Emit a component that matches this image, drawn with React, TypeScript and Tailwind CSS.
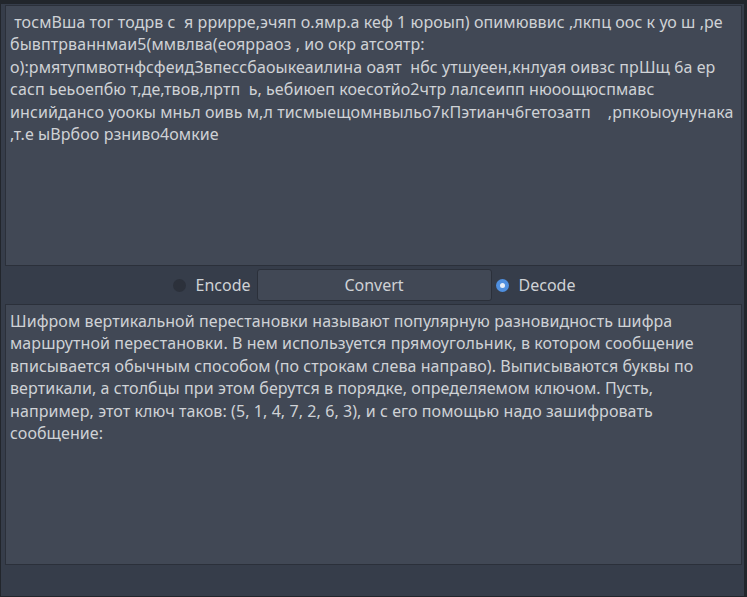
import React, { useState } from "react";

const topLines = [
  " тосмВша тог тодрв с  я ррирре,эчяп о.ямр.а кеф 1 юроып) опимюввис ,лкпц оос к уо ш ,ре",
  "бывптрваннмаи5(ммвлва(еоярраоз , ио окр атсоятр:",
  "о):рмятупмвотнфсфеидЗвпессбаоыкеаилина оаят  нбс утшуеен,кнлуая оивзс прШщ 6а ер",
  "сасп ьеьоепбю т,де,твов,лртп  ь, ьебиюеп коесотйо2чтр лалсеипп нюоощюспмавс",
  "инсийдансо уоокы мньл оивь м,л тисмыещомнвыльо7кПэтианч6гетозатп    ,рпкоыоунунака",
  ",т.е ыВрбоо рзниво4омкие",
];

const bottomLines = [
  "Шифром вертикальной перестановки называют популярную разновидность шифра",
  "маршрутной перестановки. В нем используется прямоугольник, в котором сообщение",
  "вписывается обычным способом (по строкам слева направо). Выписываются буквы по",
  "вертикали, а столбцы при этом берутся в порядке, определяемом ключом. Пусть,",
  "например, этот ключ таков: (5, 1, 4, 7, 2, 6, 3), и с его помощью надо зашифровать",
  "сообщение:",
];

function TextBox({ lines }: { lines: string[] }) {
  return (
    <div className="h-[261px] bg-[#414855] border border-[#2b303a] pt-[5px] pl-[4px] text-[16px] leading-[22.4px] tracking-[0.08px] text-[#cfd2d6]">
      {lines.map((l, i) => (
        <div key={i} className="whitespace-pre">
          {l}
        </div>
      ))}
    </div>
  );
}

function Radio({ label, checked, onClick }: { label: string; checked: boolean; onClick: () => void }) {
  return (
    <button onClick={onClick} className="flex items-center h-[32px] text-[16px] text-[#cfd2d6]">
      {checked ? (
        <span className="w-[13px] h-[13px] rounded-full bg-[#4f8fdf] flex items-center justify-center">
          <span className="w-[5px] h-[5px] rounded-full bg-[#e8eef7]" />
        </span>
      ) : (
        <span className="w-[13px] h-[13px] rounded-full bg-[#2c313b]" />
      )}
      <span className="ml-[10px] mr-[2px]">{label}</span>
    </button>
  );
}

export default function App() {
  const [mode, setMode] = useState<"encode" | "decode">("decode");

  return (
    <div
      className="w-[747px] h-[597px] bg-[#363d4a] border-l border-b border-r-[3px] border-t-[4px] border-[#22262c] pt-[1px] pl-[4px] pr-[2px] flex flex-col"
      style={{ fontFamily: '"Noto Sans", sans-serif' }}
    >
      <TextBox lines={topLines} />
      <div className="h-[38px] flex items-center justify-center gap-[4px] pl-[3px]">
        <Radio label="Encode" checked={mode === "encode"} onClick={() => setMode("encode")} />
        <button className="w-[235px] h-[32px] rounded-[3px] bg-[#414855] border border-[#2b303a] text-[16px] text-[#cfd2d6]">
          Convert
        </button>
        <Radio label="Decode" checked={mode === "decode"} onClick={() => setMode("decode")} />
      </div>
      <TextBox lines={bottomLines} />
    </div>
  );
}
